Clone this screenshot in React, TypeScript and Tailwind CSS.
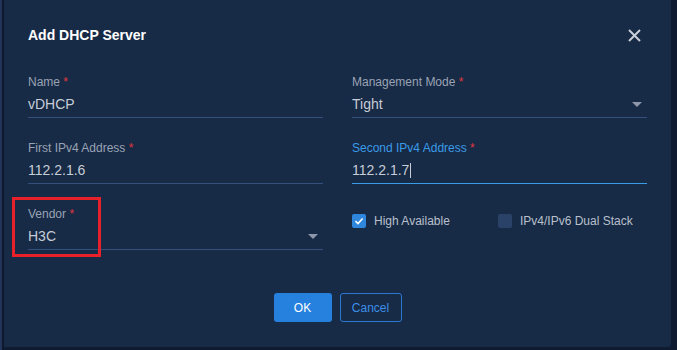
import React from 'react'

const Req = () => <span className="text-[#e0393e]"> *</span>

const Caret = () => (
  <svg width="10" height="5" viewBox="0 0 10 5" className="mr-[5px] shrink-0">
    <path d="M0 0 L10 0 L5 5 Z" fill="#8e98aa" />
  </svg>
)

const Field: React.FC<{
  label: string
  value: string
  select?: boolean
  focused?: boolean
}> = ({ label, value, select, focused }) => (
  <div className="flex flex-col">
    <div className={`text-[12px] leading-4 ${focused ? 'text-[#3b9be6]' : 'text-[#9aa3b4]'}`}>
      {label}
      <Req />
    </div>
    <div
      className={`mt-[4px] flex items-center justify-between pb-[3px] border-b ${
        focused ? 'border-[#3a9de8]' : 'border-[#34507c]'
      }`}
    >
      <span className="text-[14px] leading-5 text-[#c8cdd6] flex items-center">
        {value}
        {focused && <span className="ml-[1px] inline-block w-px h-[15px] bg-[#c8cdd6]" />}
      </span>
      {select && <Caret />}
    </div>
  </div>
)

const Check: React.FC<{ checked?: boolean; label: string }> = ({ checked, label }) => (
  <div className="flex items-center gap-[8px] whitespace-nowrap">
    <div
      className={`w-[14px] h-[14px] shrink-0 rounded-[2px] flex items-center justify-center ${
        checked ? 'bg-[#2f86dd]' : 'bg-[#2b4268]'
      }`}
    >
      {checked && (
        <svg width="10" height="10" viewBox="0 0 10 10">
          <path d="M1.5 5.2 L4 7.5 L8.6 2.5" stroke="#fff" strokeWidth="1.6" fill="none" />
        </svg>
      )}
    </div>
    <span className="text-[12px] leading-4 text-[#b9c0cc]">{label}</span>
  </div>
)

export default function App() {
  return (
    <div
      className="w-[677px] h-[350px] flex bg-[#0f1b31] overflow-hidden"
      style={{ fontFamily: '"Liberation Sans", Arial, sans-serif' }}
    >
      <div className="w-[2px] h-full bg-[#22345a]" />
      <div className="w-[2px] h-full bg-[#0e192d]" />

      {/* Dialog */}
      <div className="w-[667px] h-[347px] bg-[#172a46] rounded-br-[3px]">
        <div className="flex flex-col h-full px-6">
          {/* Header */}
          <div className="flex items-center justify-between pt-[25px] h-[45px]">
            <h2 className="text-[14px] leading-5 font-bold text-white">Add DHCP Server</h2>
            <button className="mr-[6px] p-0">
              <svg width="13" height="13" viewBox="0 0 13 13">
                <path d="M1 1 L12 12 M12 1 L1 12" stroke="#c9ced8" strokeWidth="2" />
              </svg>
            </button>
          </div>

          {/* Form */}
          <div className="grid grid-cols-2 gap-x-[29px] gap-y-[22px] mt-[29px]">
            <Field label="Name" value="vDHCP" />
            <Field label="Management Mode" value="Tight" select />
            <Field label="First IPv4 Address" value="112.2.1.6" />
            <Field label="Second IPv4 Address" value="112.2.1.7" focused />
            <div className="relative">
              <Field label="Vendor" value="H3C" select />
              <div className="absolute left-[-16px] top-[-9px] w-[89px] h-[60px] border-[3px] border-[#e8202a]" />
            </div>
            <div className="flex items-start pt-[7px]">
              <div className="w-[146px]">
                <Check checked label="High Available" />
              </div>
              <Check label="IPv4/IPv6 Dual Stack" />
            </div>
          </div>

          {/* Footer */}
          <div className="flex justify-center gap-[8px] mt-[43px]">
            <button className="w-[58px] h-[29px] rounded-[3px] bg-[#2680de] text-white text-[12px]">OK</button>
            <button className="w-[62px] h-[29px] rounded-[3px] border border-[#2a78cf] text-[#3d8fe8] text-[12px]">
              Cancel
            </button>
          </div>
        </div>
      </div>
    </div>
  )
}
